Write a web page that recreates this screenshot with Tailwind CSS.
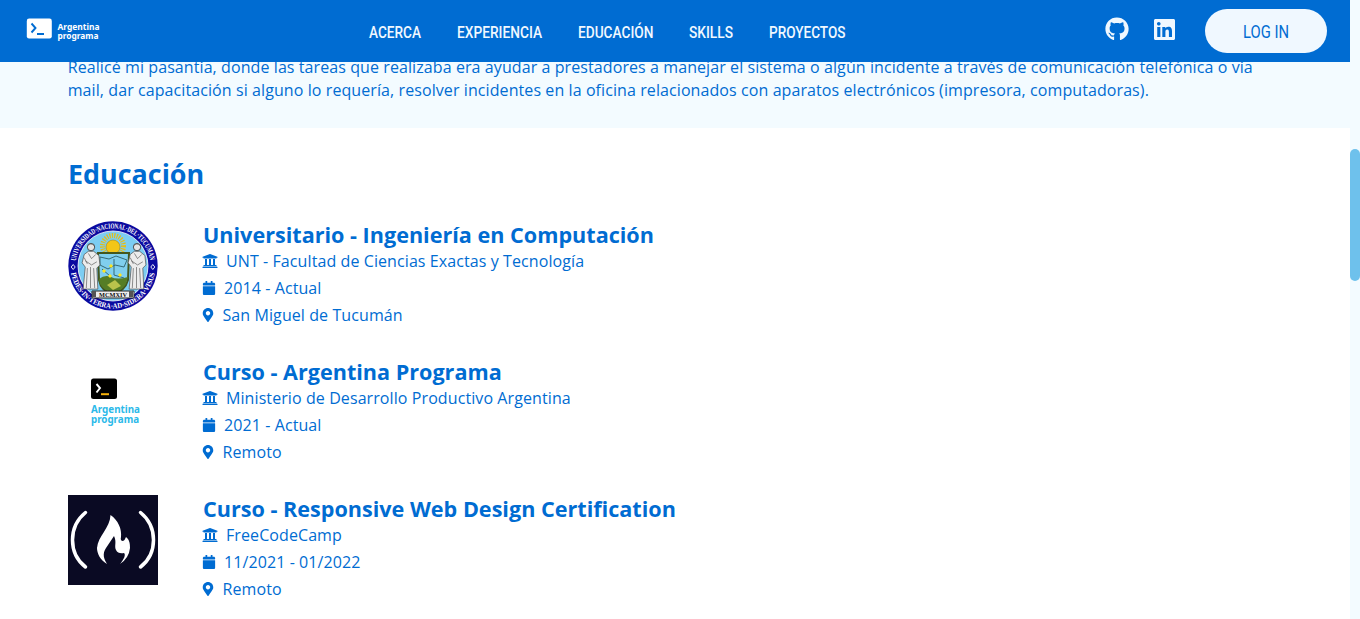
<!DOCTYPE html>
<html lang="es">
<head>
<meta charset="utf-8">
<title>Portfolio - Argentina Programa</title>
<script src="https://cdn.jsdelivr.net/npm/@tailwindcss/browser@4"></script>
</head>
<body class="h-[619px] w-[1360px] overflow-hidden bg-[#f3fbff] font-['Open_Sans',sans-serif] text-base text-[#006cd2]">
<svg class="hidden" aria-hidden="true">
  <symbol id="bank" viewBox="0 0 512 512"><path d="M496 128v16a8 8 0 0 1-8 8h-24v12c0 6.627-5.373 12-12 12H60c-6.627 0-12-5.373-12-12v-12H24a8 8 0 0 1-8-8v-16a8 8 0 0 1 4.941-7.392l232-88a7.996 7.996 0 0 1 6.118 0l232 88A8 8 0 0 1 496 128zm-24 304H40c-13.255 0-24 10.745-24 24v16a8 8 0 0 0 8 8h464a8 8 0 0 0 8-8v-16c0-13.255-10.745-24-24-24zM96 192v192H60c-6.627 0-12 5.373-12 12v20h416v-20c0-6.627-5.373-12-12-12h-36V192h-64v192h-64V192h-64v192h-64V192H96z"/></symbol>
  <symbol id="calendar" viewBox="0 0 448 512"><path d="M12 192h424c6.600 0 12 5.400 12 12v260c0 26.500-21.500 48-48 48H48c-26.500 0-48-21.500-48-48V204c0-6.600 5.400-12 12-12zm436-44v-36c0-26.500-21.500-48-48-48h-48V12c0-6.600-5.400-12-12-12h-40c-6.600 0-12 5.400-12 12v52H160V12c0-6.600-5.400-12-12-12h-40c-6.600 0-12 5.400-12 12v52H48C21.500 64 0 85.500 0 112v36c0 6.600 5.400 12 12 12h424c6.600 0 12-5.400 12-12z"/></symbol>
  <symbol id="pin" viewBox="0 0 384 512"><path d="M172.268 501.670C26.970 291.031 0 269.413 0 192 0 85.961 85.961 0 192 0s192 85.961 192 192c0 77.413-26.970 99.031-172.268 309.670-9.535 13.774-29.930 13.773-39.464 0zM192 272c44.183 0 80-35.817 80-80s-35.817-80-80-80-80 35.817-80 80 35.817 80 80 80z"/></symbol>
  <symbol id="maiden" viewBox="0 0 20 46">
    <path d="M8 9 4 12 2 20 5 24 3 45h14l-1-20 3-3-1-9-5-4z" fill="#ececec" stroke="#555" stroke-width=".7"/>
    <circle cx="10.500" cy="5" r="3.500" fill="#e4e4e4" stroke="#333" stroke-width=".8"/>
    <path d="M7 4Q10 0 14 4M8 11l3 5 4-4M5 18l6 4 5-3M7 25 6 44M10 24v20M13 25l1 19M4 15l3 6" fill="none" stroke="#666" stroke-width=".7"/>
  </symbol>
</svg>
<div class="grid h-full grid-cols-[1350px_10px]">
  <div class="flex min-w-0 flex-col">
    <header class="flex h-[62px] shrink-0 items-start bg-[#006cd2] pr-[23px] pl-[26px]">
      <svg class="mt-[18px] overflow-visible" width="76" height="24" viewBox="0 0 76 24">
        <rect x=".8" y=".6" width="25" height="20" rx="2.300" fill="#fff"/>
        <path d="m5.500 5.500 4 4.500-4 4.500M11 16h7" fill="none" stroke="#006cd2" stroke-width="1.900"/>
        <g fill="#fff" font-family="Noto Sans, sans-serif" font-size="9.200" font-weight="700"><text x="31.500" y="12" textLength="42" lengthAdjust="spacingAndGlyphs">Argentina</text><text x="31.500" y="20.500" textLength="41" lengthAdjust="spacingAndGlyphs">programa</text></g>
      </svg>
      <nav class="mt-[18px] ml-[267px] flex gap-9">
        <svg class="overflow-visible" width="52" height="28" fill="#f0f8ff" font-family="Roboto, sans-serif" font-size="16.500" font-weight="500"><text x="0" y="20" textLength="52" lengthAdjust="spacingAndGlyphs">ACERCA</text></svg>
        <svg class="overflow-visible" width="85" height="28" fill="#f0f8ff" font-family="Roboto, sans-serif" font-size="16.500" font-weight="500"><text x="0" y="20" textLength="85" lengthAdjust="spacingAndGlyphs">EXPERIENCIA</text></svg>
        <svg class="overflow-visible" width="75" height="28" fill="#f0f8ff" font-family="Roboto, sans-serif" font-size="16.500" font-weight="500"><text x="0" y="20" textLength="75.500" lengthAdjust="spacingAndGlyphs">EDUCACIÓN</text></svg>
        <svg class="overflow-visible" width="44" height="28" fill="#f0f8ff" font-family="Roboto, sans-serif" font-size="16.500" font-weight="500"><text x="0" y="20" textLength="44" lengthAdjust="spacingAndGlyphs">SKILLS</text></svg>
        <svg class="overflow-visible" width="77" height="28" fill="#f0f8ff" font-family="Roboto, sans-serif" font-size="16.500" font-weight="500"><text x="0" y="20" textLength="76.500" lengthAdjust="spacingAndGlyphs">PROYECTOS</text></svg>
      </nav>
      <div class="ml-auto flex">
        <svg class="mt-[17px]" width="24" height="24" viewBox="0 0 496 512" fill="#f0f8ff"><path d="M165.900 397.400c0 2-2.300 3.600-5.200 3.600-3.300.3-5.600-1.300-5.600-3.600 0-2 2.300-3.600 5.200-3.600 3-.3 5.600 1.300 5.600 3.600zm-31.100-4.500c-.7 2 1.300 4.300 4.300 4.900 2.600 1 5.600 0 6.200-2s-1.300-4.300-4.300-5.200c-2.600-.7-5.500.3-6.200 2.300zm44.200-1.700c-2.900.7-4.900 2.600-4.600 4.900.3 2 2.900 3.300 5.900 2.600 2.900-.7 4.900-2.600 4.600-4.600-.3-1.900-3-3.200-5.900-2.900zM244.800 8C106.100 8 0 113.300 0 252c0 110.900 69.800 205.800 169.500 239.200 12.800 2.300 17.300-5.600 17.300-12.100 0-6.200-.3-40.400-.3-61.400 0 0-70 15-84.700-29.800 0 0-11.400-29.100-27.800-36.600 0 0-22.900-15.700 1.600-15.400 0 0 24.900 2 38.600 25.800 21.900 38.600 58.600 27.500 72.900 20.900 2.300-16 8.800-27.100 16-33.700-55.900-6.200-112.300-14.300-112.300-110.500 0-27.500 7.600-41.300 23.600-58.900-2.600-6.500-11.100-33.300 2.600-67.900 20.900-6.500 69 27 69 27 20-5.600 41.500-8.500 62.800-8.500s42.800 2.900 62.800 8.500c0 0 48.100-33.600 69-27 13.700 34.700 5.200 61.400 2.600 67.900 16 17.700 25.800 31.500 25.800 58.900 0 96.500-58.900 104.200-114.800 110.500 9.200 7.900 17 22.900 17 46.400 0 33.700-.3 75.400-.3 83.600 0 6.500 4.600 14.400 17.300 12.100C428.200 457.800 496 362.900 496 252 496 113.300 383.500 8 244.800 8z"/></svg>
        <svg class="mt-[17px] ml-[25px]" width="21" height="25" viewBox="0 0 448 512" fill="#f0f8ff"><path d="M416 32H31.900C14.300 32 0 46.500 0 64.300v383.400C0 465.500 14.300 480 31.900 480H416c17.600 0 32-14.500 32-32.300V64.300c0-17.800-14.400-32.300-32-32.300zM135.400 416H69V202.200h66.500V416zm-33.200-243c-21.300 0-38.500-17.300-38.500-38.500S80.900 96 102.200 96c21.200 0 38.500 17.300 38.500 38.500 0 21.300-17.200 38.500-38.500 38.500zm282.100 243h-66.400V312c0-24.800-.5-56.700-34.500-56.700-34.600 0-39.900 27-39.900 54.900V416h-66.400V202.200h63.700v29.200h.9c8.900-16.800 30.600-34.500 62.900-34.500 67.200 0 79.700 44.300 79.700 101.900V416z"/></svg>
        <button class="mt-[9px] ml-[30px] flex h-11 w-[122px] items-center justify-center rounded-full bg-[#f0f8ff]">
          <svg class="overflow-visible" width="47" height="28" fill="#006cd2" font-family="Roboto, sans-serif" font-size="18"><text x="0" y="21" textLength="46" lengthAdjust="spacingAndGlyphs">LOG IN</text></svg>
        </button>
      </div>
    </header>
    <section class="h-[66px] shrink-0 overflow-hidden pl-[67.700px]">
      <p class="-mt-[6px] leading-[23px] tracking-[0.087px] whitespace-nowrap">Realicé mi pasantía, donde las tareas que realizaba era ayudar a prestadores a manejar el sistema o algún incidente a través de comunicación telefónica o vía<br>mail, dar capacitación si alguno lo requería, resolver incidentes en la oficina relacionados con aparatos electrónicos (impresora, computadoras).</p>
    </section>
    <main class="flex-1 bg-white pt-[26px] pl-[68px] tracking-[0.09px]">
      <h2 class="h-[67px] text-[26.900px] leading-[40px] font-bold tracking-normal">Educación</h2>
      <article class="flex h-[137px] gap-[45px]">
        <svg width="90" height="90" viewBox="0 0 90 90" class="tracking-normal">
          <defs>
            <path id="ringTop" d="M7.500 45A37.500 37.500 0 0 1 82.500 45"/>
            <path id="ringBottom" d="M2.500 45A42.500 42.500 0 0 0 87.500 45"/>
          </defs>
          <circle cx="45" cy="45" r="44.700" fill="#0a0aa0"/>
          <circle cx="45" cy="45" r="35" fill="#7ccdf2" stroke="#fff" stroke-width=".8"/>
          <g fill="#fff" font-family="Liberation Serif, serif" font-size="7.500" font-weight="700">
            <text><textPath href="#ringTop" startOffset="5" textLength="107" lengthAdjust="spacingAndGlyphs">UNIVERSIDAD·NACIONAL·DEL·TUCUMAN</textPath></text>
            <text><textPath href="#ringBottom" startOffset="7" textLength="119" lengthAdjust="spacingAndGlyphs">PEDES·IN·TERRA·AD·SIDERA·VISUS</textPath></text>
          </g>
          <path d="m5.200 43.500 2 2.500-2 2.500-2-2.500zM84.800 43.500l2 2.500-2 2.500-2-2.500z" fill="none" stroke="#fff" stroke-width=".9"/>
          <circle cx="45" cy="25" r="10.500" fill="none" stroke="#e5be18" stroke-width="5" stroke-dasharray="1.200 1.200"/>
          <circle cx="45" cy="26" r="7" fill="#f3c617" stroke="#a8860b" stroke-width=".6"/>
          <path d="M30 32h31l-1 27q-3 11-15 14-12-3-14-14z" fill="#80cfee" stroke="#43571e" stroke-width="2"/>
          <path d="M31 58q6-5 12-2t17 0l-2 7q-4 7-13 9-10-3-13-9z" fill="#557d25"/>
          <path d="M32 36l9 2 7-3 11 4-3 7-9-2-7 4-8-4zm2 12 8 7m4-17v16l10 3" fill="none" stroke="#356b78" stroke-width="1"/>
          <path d="m36 48 2 2-2 2-2-2zm7-5 2 2-2 2-2-2zm-1 10 2 2-2 2-2-2zm10-1 2 2-2 2-2-2z" fill="#ffe51b"/>
          <path d="m39 64 8-5 6 6-8 4z" fill="#bac34b"/>
          <use href="#maiden" x="12" y="20" width="21" height="50"/>
          <use href="#maiden" x="58" y="20" width="21" height="50"/>
          <path d="M24 70h42v7H24z" fill="#eee" stroke="#222"/>
          <path d="M24 70h4v6h-4zm37 0h4v6h-4z" fill="#555"/>
          <text x="31" y="76.200" textLength="28" lengthAdjust="spacingAndGlyphs" font-family="Liberation Serif, serif" font-size="7" font-weight="700" fill="#111">MCMXIV</text>
        </svg>
        <div class="-mt-px">
          <h3 class="h-[27px] text-[21.600px] leading-[30px] font-bold tracking-normal">Universitario - Ingeniería en Computación</h3>
          <p class="flex h-[27px] items-center"><svg class="-ml-px mr-2 fill-current" width="16" height="16"><use href="#bank"/></svg>UNT - Facultad de Ciencias Exactas y Tecnología</p>
          <p class="flex h-[27px] items-center"><svg class="-ml-px mr-2 fill-current" width="14" height="14"><use href="#calendar"/></svg>2014 - Actual</p>
          <p class="flex h-[27px] items-center"><svg class="-ml-px mr-[8.500px] fill-current" width="12" height="14"><use href="#pin"/></svg>San Miguel de Tucumán</p>
        </div>
      </article>
      <article class="flex h-[137px] gap-[45px]">
        <svg width="90" height="90" viewBox="0 0 90 90" class="tracking-normal">
          <rect x="23" y="20.500" width="26" height="20.500" rx="2.500" fill="#000"/>
          <path d="m28.500 26 3.500 4-3.500 4.500" fill="none" stroke="#fff" stroke-width="1.900"/><path d="M33 36.200h8" stroke="#f7b10a" stroke-width="2"/>
          <g fill="#2bb9e9" font-family="Noto Sans, sans-serif" font-size="10.800" font-weight="700"><text x="23" y="54.500" textLength="49" lengthAdjust="spacingAndGlyphs">Argentina</text><text x="23" y="64.500" textLength="48" lengthAdjust="spacingAndGlyphs">programa</text></g>
        </svg>
        <div class="-mt-px">
          <h3 class="h-[27px] text-[21.600px] leading-[30px] font-bold tracking-normal">Curso - Argentina Programa</h3>
          <p class="flex h-[27px] items-center"><svg class="-ml-px mr-2 fill-current" width="16" height="16"><use href="#bank"/></svg>Ministerio de Desarrollo Productivo Argentina</p>
          <p class="flex h-[27px] items-center"><svg class="-ml-px mr-2 fill-current" width="14" height="14"><use href="#calendar"/></svg>2021 - Actual</p>
          <p class="flex h-[27px] items-center"><svg class="-ml-px mr-[8.500px] fill-current" width="12" height="14"><use href="#pin"/></svg>Remoto</p>
        </div>
      </article>
      <article class="flex gap-[45px]">
        <svg width="90" height="90" viewBox="0 0 90 90">
          <path d="M0 0h90v90H0z" fill="#0a0a23"/>
          <path d="M17.500 17.500Q4.500 28 4.500 45T17.500 72M72.500 17.500Q85.500 28 85.500 45T72.500 72" fill="none" stroke="#fff" stroke-width="3.500" stroke-linecap="round"/>
          <path d="M42.500 20C50 25 54 34 53 42q-1 4 2 4 2-1 3-4c4 3 4 8 4 11q-1 10-10 16c4-5 6-9 4-11q-6 1-8-3c-2-4 1-8-2-14l-8 12c-4 6-2 11 1 16-7-4-10-11-10-16 1-12 13-20 13.500-33z" fill="#fff"/>
        </svg>
        <div class="-mt-px">
          <h3 class="h-[27px] text-[21.600px] leading-[30px] font-bold tracking-normal">Curso - Responsive Web Design Certification</h3>
          <p class="flex h-[27px] items-center"><svg class="-ml-px mr-2 fill-current" width="16" height="16"><use href="#bank"/></svg>FreeCodeCamp</p>
          <p class="flex h-[27px] items-center"><svg class="-ml-px mr-2 fill-current" width="14" height="14"><use href="#calendar"/></svg>11/2021 - 01/2022</p>
          <p class="flex h-[27px] items-center"><svg class="-ml-px mr-[8.500px] fill-current" width="12" height="14"><use href="#pin"/></svg>Remoto</p>
        </div>
      </article>
    </main>
  </div>
  <div class="pt-[149px]"><div class="h-[132px] rounded-full bg-[#6ec1ec]"></div></div>
</div>
</body>
</html>
